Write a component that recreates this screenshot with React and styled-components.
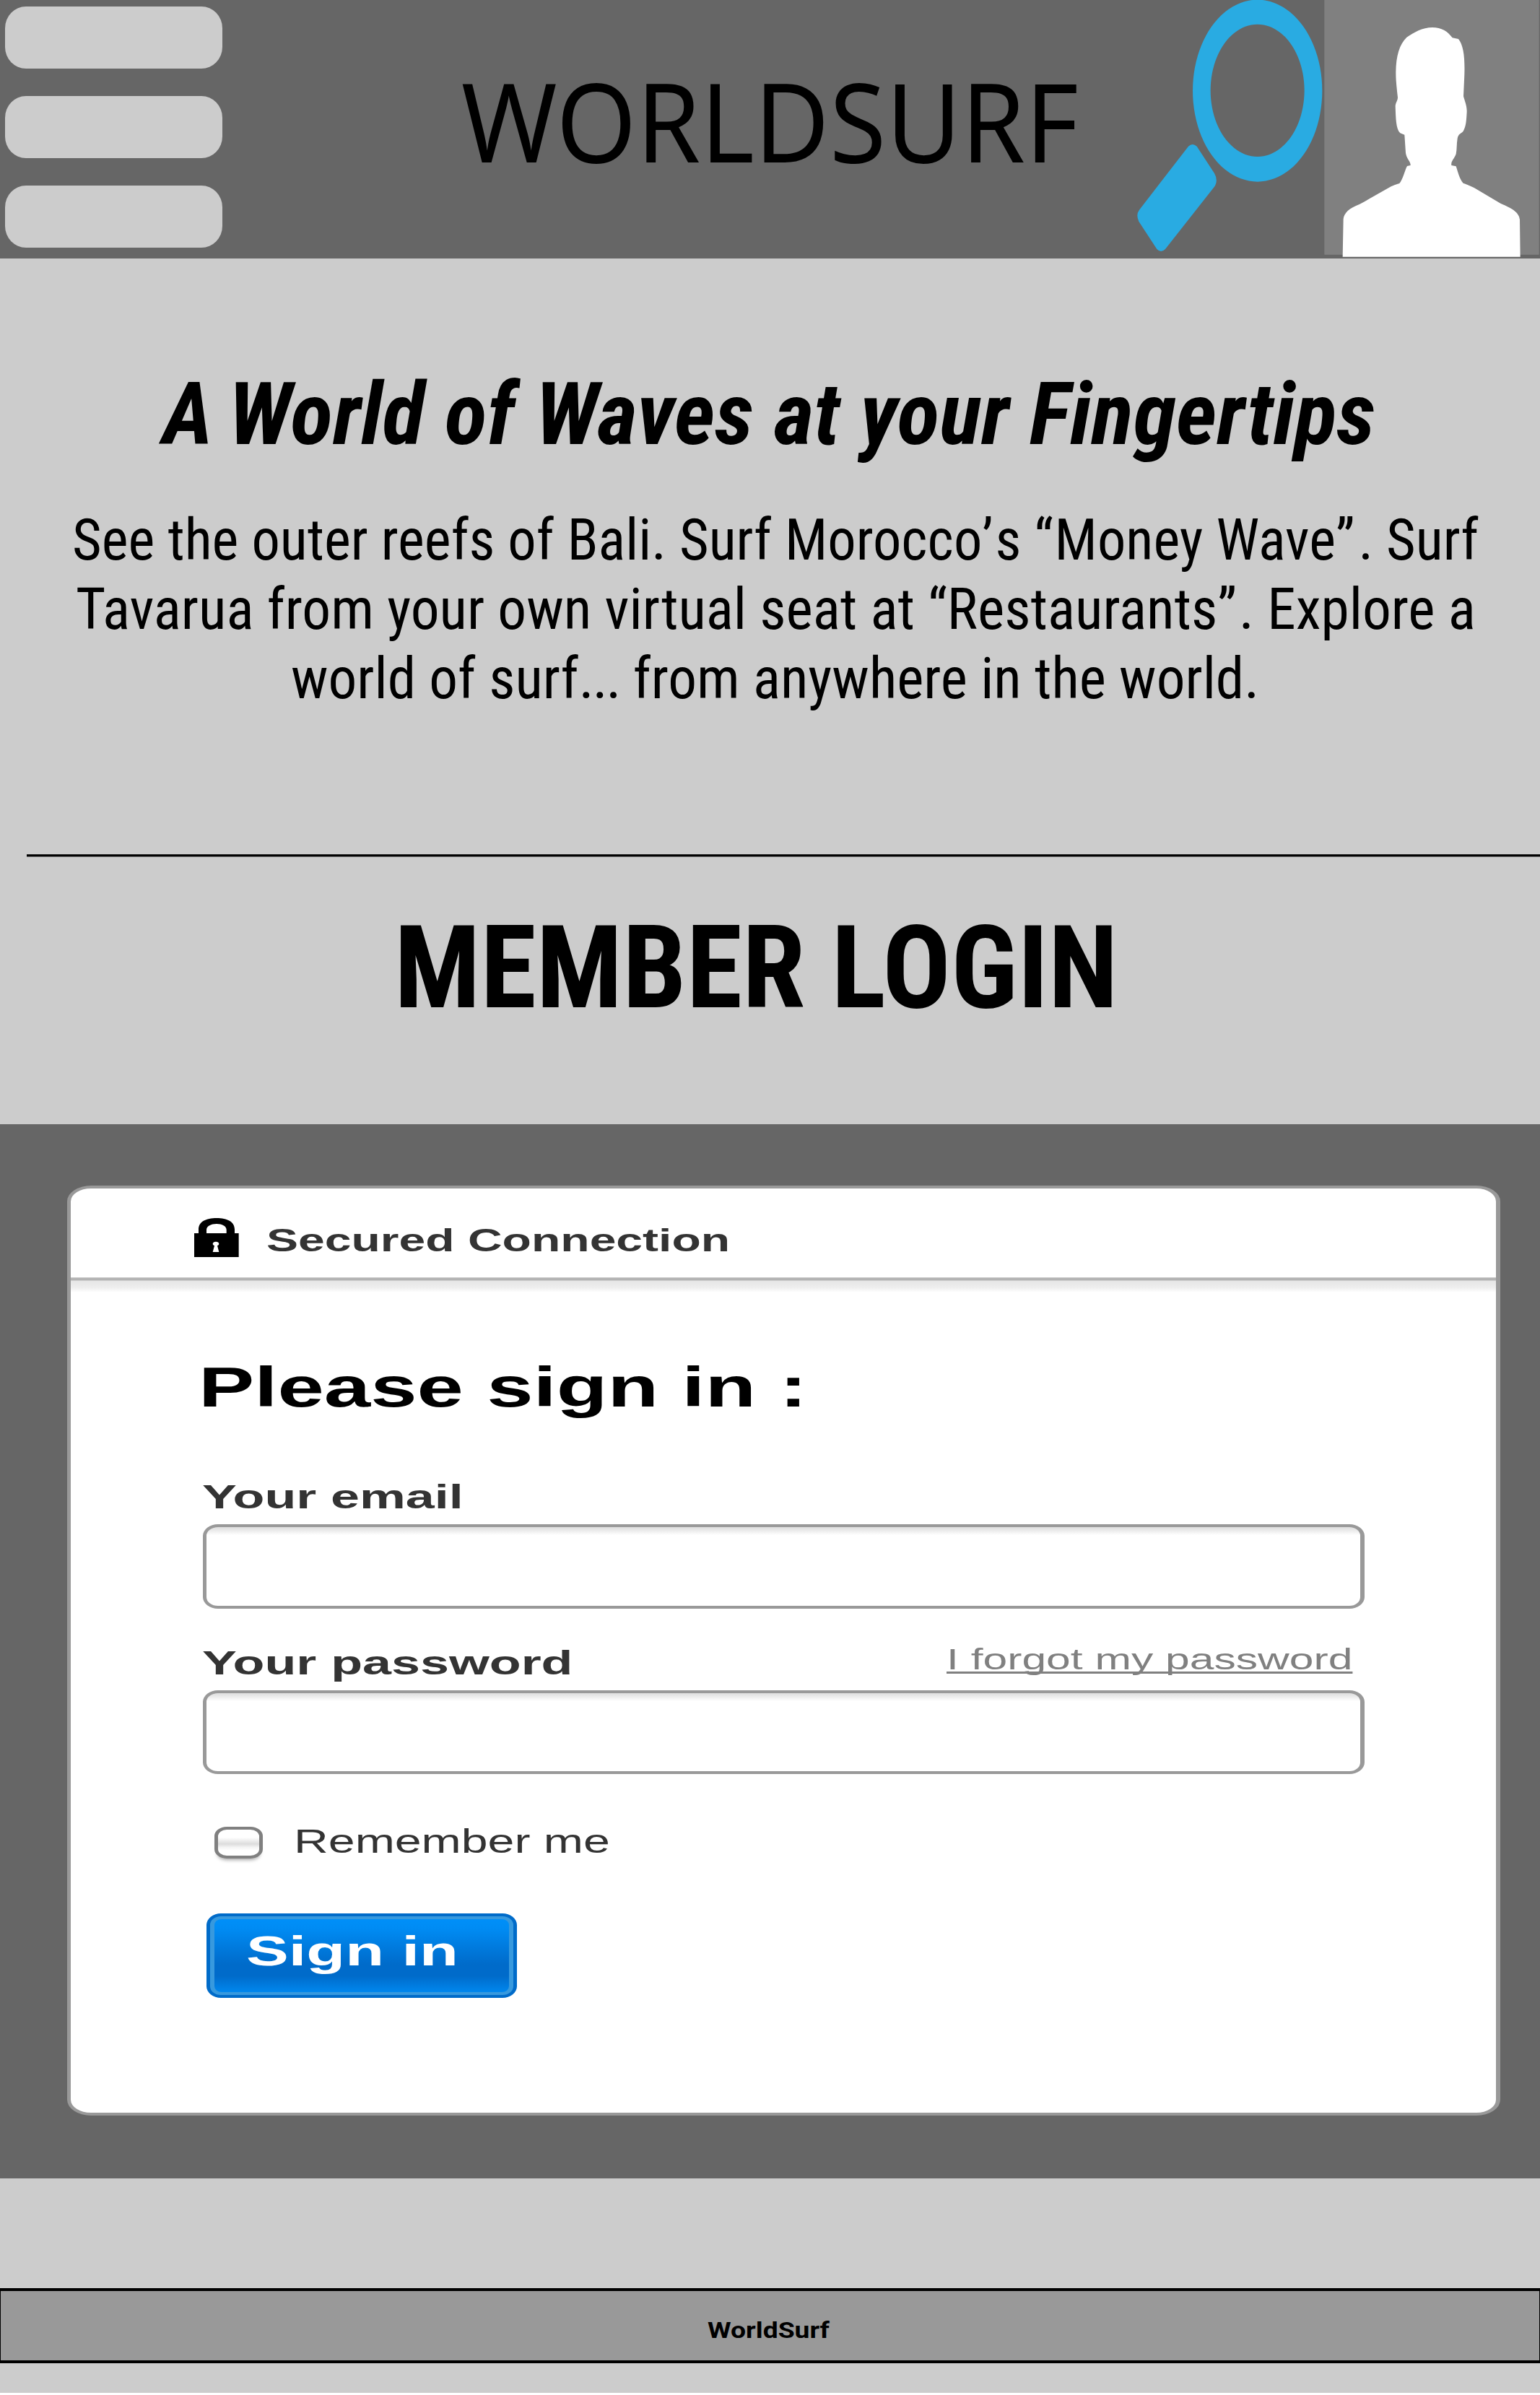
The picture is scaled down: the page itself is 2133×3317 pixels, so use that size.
import React from 'react';
import styled, { createGlobalStyle } from 'styled-components';

const GlobalStyle = createGlobalStyle`
  html, body { margin: 0; padding: 0; background: #fff; }
  *, *::before, *::after { box-sizing: border-box; }
`;

const condensed = "'Roboto Condensed', Roboto, sans-serif";
const arial = "'Liberation Sans', Arial, sans-serif";

const Page = styled.main`
  width: 2133px;
  height: 3314px;
  display: flex;
  flex-direction: column;
  background: #ccc;
  color: #000;
  overflow: hidden;
`;

/* One line of type, widened or narrowed by its $stretch factor. */
const Line = styled.span`
  display: block;
  width: max-content;
  white-space: nowrap;
  transform-origin: 0 50%;
  transform: scaleX(${(p) => p.$stretch ?? 1});
  margin-left: ${(p) => p.$indent ?? 0}px;
`;

/* Tracking for a few glyphs inside a line. */
const Track = styled.span`
  letter-spacing: ${(p) => p.$by}px;
`;

/* ---------- header ---------- */

const Header = styled.header`
  display: flex;
  align-items: flex-start;
  height: 358px;
  flex: none;
  background: #666;
`;

const MenuButton = styled.button`
  display: flex;
  flex-direction: column;
  gap: 38px;
  width: 308px;
  padding: 9px 0 0 6.5px;
  border: 0;
  background: none;
`;

const MenuBar = styled.span`
  width: 301px;
  height: 86px;
  border-radius: 29px / 30px;
  background: #ccc;
`;

const Logo = styled.div`
  width: 1252px;
  padding-left: 330.5px;
  font: 400 151px/333px 'Noto Sans', 'Open Sans', sans-serif;
`;

const SearchIcon = styled.svg`
  display: block;
  flex: none;
  width: 270px;
  height: 358px;
  overflow: visible;
`;

const Avatar = styled.svg`
  display: block;
  flex: none;
  width: 303px;
  height: 358px;
`;

/* ---------- intro ---------- */

const Intro = styled.section`
  flex: none;
  height: 825px;
  padding-top: 146px;
`;

const Tagline = styled.h1`
  margin: 0;
  font: italic 700 121px/140px ${condensed};
`;

const Blurb = styled.p`
  margin: 56px 0 0;
  font: 440 80.4px/96px ${condensed};
`;

const Rule = styled.hr`
  flex: none;
  width: 2096px;
  height: 4px;
  margin: 0 0 0 37px;
  border: 0;
  background: linear-gradient(#2a2a2a 1px, #000 1px, #000 3px, #666 3px);
`;

const LoginHeading = styled.h2`
  flex: none;
  margin: 74px 0 136px;
  font: 700 160px/160px ${condensed};
`;

/* ---------- login card ---------- */

const Band = styled.section`
  flex: none;
  height: 1460px;
  padding: 85px 55px 0 93px;
  background: #666;
`;

const Card = styled.form`
  height: 1288px;
  border: solid #999;
  border-width: 4px 6px 4px 5px;
  border-radius: 33px / 22px;
  background: #fff;
  font-family: ${arial};
  color: #333;
`;

const CardHeader = styled.div`
  display: flex;
  align-items: flex-start;
  height: 123px;
  padding-left: 170px;
`;

const CardDivider = styled.div`
  height: 23px;
  background: linear-gradient(
    #ccc 1px, #b3b3b3 1px, #b3b3b3 4px, #ccc 4px, #ccc 5px,
    #e6e6e6 5px, #eee 14px, #fff 21px
  );
`;

const LockIcon = styled.svg`
  display: block;
  flex: none;
  width: 64px;
  height: 57px;
  margin-top: 39.5px;
`;

const Secured = styled.div`
  padding: 25px 0 0 36.5px;
  font-size: 43.5px;
  line-height: 95px;
  font-weight: 700;
`;

const Fields = styled.div`
  padding: 89px 182px 0 182px;
`;

const FormTitle = styled.h3`
  margin: 0 0 87px -4.8px;
  font-size: 77.5px;
  line-height: 80px;
  font-weight: 700;
  color: #000;
`;

const LabelRow = styled.div`
  display: flex;
  justify-content: space-between;
  height: 50px;
  margin-bottom: 13px;
`;

const Label = styled.label`
  font-size: 47px;
  line-height: 50px;
  font-weight: 700;
`;

const ForgotLink = styled.a`
  width: 579px;
  margin-top: -5px;
  font-size: 41px;
  line-height: 50px;
  color: #808080;
  text-decoration: underline;
  text-decoration-thickness: 3px;
  text-underline-offset: 3px;
  text-decoration-skip-ink: none;
`;

const Input = styled.input`
  display: block;
  width: 1609px;
  height: ${(p) => p.$height}px;
  margin: 0 0 ${(p) => p.$after}px 0.6px;
  padding: 0 24px;
  border: solid #999;
  border-width: 4px 6px 4px 5px;
  border-radius: 21px / 16px;
  outline: 0;
  background: linear-gradient(#ddd, #ececec 5px, #fff 11px);
  font: 400 44px ${arial};
`;

const RememberRow = styled.div`
  display: flex;
  height: 50px;
  margin-bottom: 75px;
`;

const Checkbox = styled.span`
  flex: none;
  width: 67px;
  height: 43.5px;
  margin: 5px 42.5px 0 17px;
  border: solid #808080;
  border-width: 4px 5.5px;
  border-radius: 17px / 13px;
  background: linear-gradient(#fff 30%, #dcdcdc 55%, #f4f4f4 68%, #fff 80%);
  box-shadow: 0 6px 5px -4px rgba(0, 0, 0, 0.35);
`;

const RememberText = styled.span`
  font-size: 45.5px;
  line-height: 52px;
`;

const SignIn = styled.button`
  display: block;
  width: 430px;
  height: 117px;
  margin-left: 6px;
  padding: 0;
  border: solid #006bc9;
  border-width: 4px 5px;
  border-radius: 20px / 16px;
  background: #3799de;
  text-align: left;
`;

const SignInFace = styled.span`
  display: block;
  height: 101px;
  margin: 0 6px;
  padding-left: 44px;
  border-radius: 10px / 8px;
  background: linear-gradient(#008ff8, #008cf4 12%, #006bca 62%, #006bca 78%, #0087ee 100%);
  font: 700 58px/88px ${arial};
  color: #fff;
`;

/* ---------- footer ---------- */

const Footer = styled.footer`
  flex: none;
  height: 104px;
  margin-top: 152px;
  padding-top: 7px;
  border: solid #000;
  border-width: 4px 1px;
  background: #999;
  font: 700 31.5px/96px Roboto, sans-serif;
`;

export default function App() {
  return (
    <>
      <GlobalStyle />
      <Page>
        <Header>
          <MenuButton type="button" aria-label="Menu">
            <MenuBar />
            <MenuBar />
            <MenuBar />
          </MenuButton>
          <Logo>
            <Line $stretch={0.944}>WORLDSURF</Line>
          </Logo>
          <SearchIcon viewBox="0 0 810 1074" fill="#29abe2">
            <path
              fillRule="evenodd"
              d="M545 -1a269 378 0 1 0 .1 0ZM545 101a195 275 0 1 1 -.1 0Z"
            />
            <path d="M258 608Q275 592 293 608L366 720Q382 748 368 773L162 1035Q144 1053 127 1035L52 920Q39 892 54 872Z" />
          </SearchIcon>
          <Avatar viewBox="0 0 909 1074">
            <rect x="12" y="0" width="894" height="1058" fill="#787878" />
            <rect x="15" y="0" width="888" height="1058" fill="#808080" />
            <path
              fill="#fff"
              d="M89 1067L92 910C95 885 115 865 160 848Q178 840 200 826L290 775Q305 767 325 762C340 745 350 700 357 690L371 687C372 670 354 660 351 635L346 560L328 553C310 535 310 490 308 440C310 425 317 420 318 405C312 350 310 330 310 300C311 230 325 185 355 155C385 135 420 114 462 114C500 114 525 130 545 157L570 162C592 190 597 240 595 310L591 400C596 420 606 440 605 465C603 500 602 525 590 545C580 556 570 555 566 575C562 600 564 620 560 640C553 660 538 670 541 687L560 691C568 715 575 745 590 761Q610 768 635 780L745 845C800 868 822 885 825 912L827 1067Z"
            />
          </Avatar>
        </Header>

        <Intro>
          <Tagline>
            <Line $indent={224.5} $stretch={1.004}>
              A<Track $by={-7}> </Track>World of Waves at your Fingertips
            </Line>
          </Tagline>
          <Blurb>
            <Line $indent={99.5} $stretch={0.977}>
              See the outer reefs of Bali. Surf Morocco<Track $by={3}>’</Track>s{' '}
              <Track $by={2}>“</Track>Money Wave<Track $by={5}>”</Track>. Surf
            </Line>
            <Line $indent={105} $stretch={0.988}>
              Tavarua from your own virtual seat at “Restaurants<Track $by={3}>”</Track>. Explore a
            </Line>
            <Line $indent={403} $stretch={0.9865}>
              world of surf<Track $by={-2}>...</Track> from anywhere in the world.
            </Line>
          </Blurb>
        </Intro>
        <Rule />
        <LoginHeading>
          <Line $indent={545.5} $stretch={0.985}>MEMBER LOGIN</Line>
        </LoginHeading>

        <Band>
          <Card>
            <CardHeader>
              <LockIcon viewBox="0 0 192 171">
                <path d="M21 69V50C21 18 52 3 96 3S171 18 171 50V66H188V165H3V66H21ZM54 66H137V52C137 36 118 27 96 27S54 36 54 52Z" fill="#000" fillRule="evenodd" />
                <path d="M80 144L87 118A13 9 0 1 1 99 118L106 144Z" fill="#fff" />
              </LockIcon>
              <Secured>
                <Line $stretch={1.518}>Secured Connection</Line>
              </Secured>
            </CardHeader>
            <CardDivider />
            <Fields>
              <FormTitle>
                <Line $stretch={1.494}>Please sign in :</Line>
              </FormTitle>
              <LabelRow>
                <Label htmlFor="email">
                  <Line $stretch={1.527}>Your email</Line>
                </Label>
              </LabelRow>
              <Input id="email" type="email" $height={117} $after={50} />
              <LabelRow>
                <Label htmlFor="password">
                  <Line $stretch={1.528}>Your password</Line>
                </Label>
                <ForgotLink>
                  <Line $stretch={1.478}>I forgot my password</Line>
                </ForgotLink>
              </LabelRow>
              <Input id="password" type="password" $height={116} $after={68} />
              <RememberRow>
                <Checkbox role="checkbox" aria-checked="false" />
                <RememberText>
                  <Line $stretch={1.455}>Remember me</Line>
                </RememberText>
              </RememberRow>
              <SignIn type="button">
                <SignInFace>
                  <Line $stretch={1.52}>Sign in</Line>
                </SignInFace>
              </SignIn>
            </Fields>
          </Card>
        </Band>

        <Footer>
          <Line $indent={979} $stretch={1.184}>WorldSurf</Line>
        </Footer>
      </Page>
    </>
  );
}
